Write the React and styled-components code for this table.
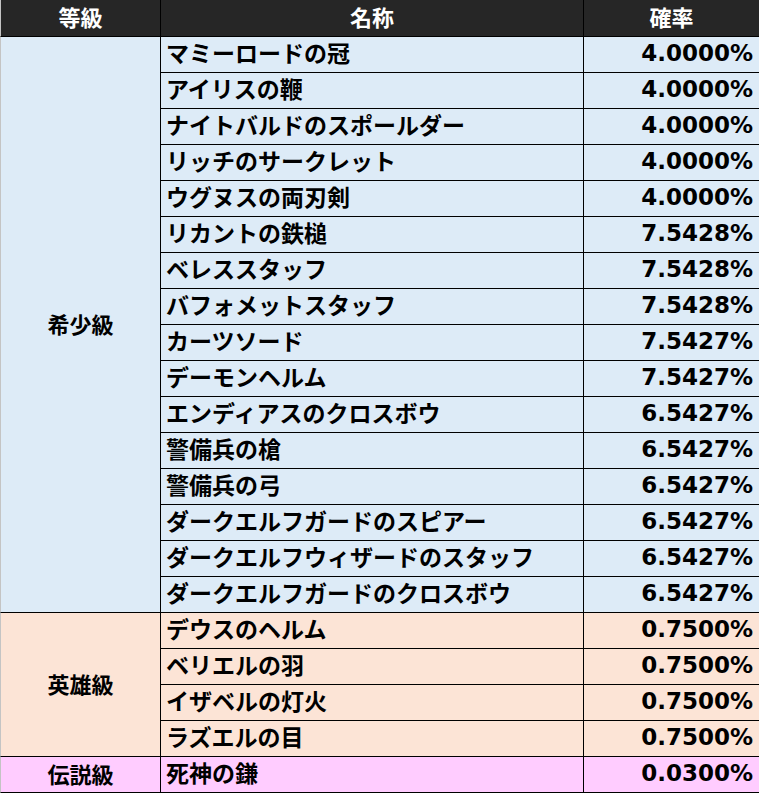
import React from "react";
import styled, { createGlobalStyle } from "styled-components";

const Global = createGlobalStyle`
  html, body { margin: 0; padding: 0; background: #ffffff; }
  body { font-family: "Noto Sans CJK JP", sans-serif; }
`;

const COLORS = {
  rare: "#DDEBF7",
  hero: "#FCE4D6",
  legend: "#FFCCFF",
};

const groups = [
  {
    grade: "希少級",
    bg: COLORS.rare,
    items: [
      ["マミーロードの冠", "4.0000%"],
      ["アイリスの鞭", "4.0000%"],
      ["ナイトバルドのスポールダー", "4.0000%"],
      ["リッチのサークレット", "4.0000%"],
      ["ウグヌスの両刃剣", "4.0000%"],
      ["リカントの鉄槌", "7.5428%"],
      ["ベレススタッフ", "7.5428%"],
      ["バフォメットスタッフ", "7.5428%"],
      ["カーツソード", "7.5427%"],
      ["デーモンヘルム", "7.5427%"],
      ["エンディアスのクロスボウ", "6.5427%"],
      ["警備兵の槍", "6.5427%"],
      ["警備兵の弓", "6.5427%"],
      ["ダークエルフガードのスピアー", "6.5427%"],
      ["ダークエルフウィザードのスタッフ", "6.5427%"],
      ["ダークエルフガードのクロスボウ", "6.5427%"],
    ],
  },
  {
    grade: "英雄級",
    bg: COLORS.hero,
    items: [
      ["デウスのヘルム", "0.7500%"],
      ["ベリエルの羽", "0.7500%"],
      ["イザベルの灯火", "0.7500%"],
      ["ラズエルの目", "0.7500%"],
    ],
  },
  {
    grade: "伝説級",
    bg: COLORS.legend,
    items: [["死神の鎌", "0.0300%"]],
  },
];

const Table = styled.table`
  width: 759px;
  table-layout: fixed;
  border-collapse: separate;
  border-spacing: 0;
  font-weight: 700;
  font-size: 23px;
  color: #000;
`;

const HeadRow = styled.tr`
  height: 37px;
`;

const Row = styled.tr`
  height: 36px;
`;

const HeadCell = styled.th`
  box-sizing: border-box;
  padding: 0 0 4px 0;
  background: #262626;
  color: #ffffff;
  font-family: "Noto Sans CJK JP", sans-serif;
  font-weight: 700;
  font-size: 22px;
  text-align: center;
  line-height: 1;
  border-bottom: 1px solid #000;
  border-right: ${(p) => (p.$last ? "none" : "1px solid #000")};
  border-left: ${(p) => (p.$first ? "1px solid #c4c4c4" : "none")};
`;

const GradeCell = styled.td`
  box-sizing: border-box;
  padding: 0 0 4px 0;
  background: ${(p) => p.$bg};
  font-family: "Noto Sans CJK JP", sans-serif;
  font-size: 22px;
  text-align: center;
  vertical-align: middle;
  line-height: 1;
  border-left: 1px solid #c4c4c4;
  border-right: 1px solid #000;
  border-bottom: 1px solid #000;
`;

const NameCell = styled.td`
  box-sizing: border-box;
  padding: 0 0 4px 5px;
  background: ${(p) => p.$bg};
  font-family: "Noto Sans CJK JP", sans-serif;
  text-align: left;
  vertical-align: middle;
  line-height: 1;
  white-space: nowrap;
  border-right: 1px solid #000;
  border-bottom: 1px solid #000;
`;

const RateCell = styled.td`
  box-sizing: border-box;
  padding: 0 6px 2px 0;
  background: ${(p) => p.$bg};
  font-family: "DejaVu Sans", "Noto Sans CJK JP", sans-serif;
  text-align: right;
  vertical-align: middle;
  line-height: 1;
  white-space: nowrap;
  border-bottom: 1px solid #000;
`;

export default function App() {
  return (
    <>
      <Global />
      <Table>
        <colgroup>
          <col style={{ width: 161 }} />
          <col style={{ width: 423 }} />
          <col style={{ width: 175 }} />
        </colgroup>
        <thead>
          <HeadRow>
            <HeadCell $first>等級</HeadCell>
            <HeadCell>名称</HeadCell>
            <HeadCell $last>確率</HeadCell>
          </HeadRow>
        </thead>
        <tbody>
          {groups.map((g) =>
            g.items.map(([name, rate], i) => (
              <Row key={g.grade + name}>
                {i === 0 && (
                  <GradeCell $bg={g.bg} rowSpan={g.items.length}>
                    {g.grade}
                  </GradeCell>
                )}
                <NameCell $bg={g.bg}>{name}</NameCell>
                <RateCell $bg={g.bg}>{rate}</RateCell>
              </Row>
            ))
          )}
        </tbody>
      </Table>
    </>
  );
}
